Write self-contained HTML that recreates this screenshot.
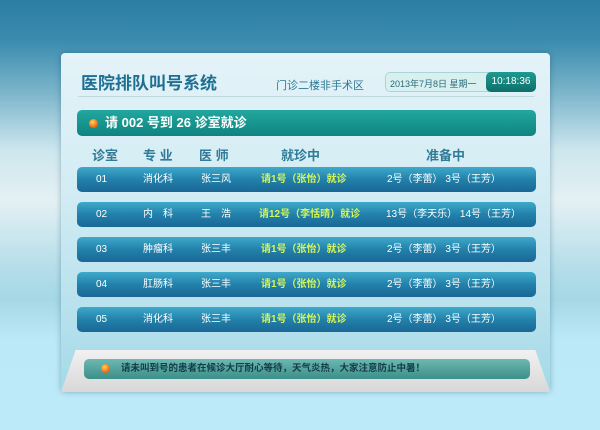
<!DOCTYPE html>
<html><head><meta charset="utf-8"><style>
*{margin:0;padding:0;box-sizing:border-box}
body{width:600px;height:430px;overflow:hidden;position:relative;font-family:"Liberation Sans","Noto Sans CJK SC",sans-serif;
background:linear-gradient(#2d7ea3 0px,#3a8bae 40px,#78b3c9 90px,#cde6ee 150px,#e4f1f4 200px,#b3dde9 270px,#a6d8e6 300px,#bce9f7 340px,#bdeaf8 430px)}
.panel{position:absolute;left:61px;top:53px;width:489px;height:339px;border-radius:4px;
background:linear-gradient(#e4f3f8,#d3ecf4 40%,#b4e0ec 80%,#a4d9e8);box-shadow:0 0 6px rgba(0,60,90,.35)}
.abs{position:absolute}
.title{left:81px;top:69px;font-size:17px;color:#1e6f92;font-weight:bold}
.sub{left:276px;top:77px;font-size:11px;color:#2e7894}
.line{left:78px;top:96px;width:456px;height:1px;background:#bcd9e2}
.date{left:385px;top:72px;width:151px;height:20px;border-radius:5px;background:#d8f0ef;border:1px solid #a8d6d6;font-size:9px;color:#2a6a7a;padding:4px 0 0 4px;white-space:nowrap;overflow:hidden}
.time{left:486px;top:72px;width:50px;height:20px;border-radius:5px;background:linear-gradient(#1f9a90,#0c6f6a);color:#fff;font-size:10px;text-align:center;line-height:20px}
.call{left:77px;top:110px;width:459px;height:26px;border-radius:5px;background:linear-gradient(#22a79e,#0e8480);color:#fff;font-size:13px;line-height:26px;padding-left:28px;font-weight:bold}
.dot{position:absolute;width:9px;height:9px;border-radius:50%;background:radial-gradient(circle at 40% 35%,#ffd35a,#f06010 70%)}
.hd{top:145px;font-size:13px;color:#2f7b98;font-weight:bold}
.row{position:absolute;left:77px;width:459px;height:25px;border-radius:5px;background:linear-gradient(#3fa9cb,#2281aa 50%,#1b6796);color:#fff;font-size:10px;line-height:25px}
.row span{position:absolute}
.g{color:#d6f55a;font-weight:bold}
.foot{left:61px;top:350px;width:489px;height:42px;background:linear-gradient(#f1f1f1,#d8d8d8);clip-path:polygon(3% 0,97% 0,100% 100%,0 100%);border-radius:14px 14px 0 0}
.fb{left:84px;top:359px;width:446px;height:20px;border-radius:5px;background:linear-gradient(#6db8b1,#3c8f89);font-size:9.5px;color:#123c48;line-height:20px;padding-left:37px;font-weight:bold}
</style></head><body>
<div class="panel"></div>
<div class="abs title">医院排队叫号系统</div>
<div class="abs sub">门诊二楼非手术区</div>
<div class="abs line"></div>
<div class="abs date">2013年7月8日 星期一</div>
<div class="abs time">10:18:36</div>
<div class="abs call"><div class="dot" style="left:12px;top:9px"></div>请 002 号到 26 诊室就诊</div>
<div class="abs hd" style="left:92px">诊室</div>
<div class="abs hd" style="left:143px">专 业</div>
<div class="abs hd" style="left:199px">医 师</div>
<div class="abs hd" style="left:281px">就珍中</div>
<div class="abs hd" style="left:426px">准备中</div>

<div class="row" style="top:167px"><span style="left:19px">01</span><span style="left:66px">消化科</span><span style="left:124px">张三风</span><span class="g" style="left:184px">请1号（张怡）就诊</span><span style="left:310px">2号（李蕾） 3号（王芳）</span></div>
<div class="row" style="top:202px"><span style="left:19px">02</span><span style="left:66px">内　科</span><span style="left:124px">王　浩</span><span class="g" style="left:182px">请12号（李恬晴）就诊</span><span style="left:309px">13号（李天乐） 14号（王芳）</span></div>
<div class="row" style="top:237px"><span style="left:19px">03</span><span style="left:66px">肿瘤科</span><span style="left:124px">张三丰</span><span class="g" style="left:184px">请1号（张怡）就诊</span><span style="left:310px">2号（李蕾） 3号（王芳）</span></div>
<div class="row" style="top:272px"><span style="left:19px">04</span><span style="left:66px">肛肠科</span><span style="left:124px">张三丰</span><span class="g" style="left:184px">请1号（张怡）就诊</span><span style="left:310px">2号（李蕾） 3号（王芳）</span></div>
<div class="row" style="top:307px"><span style="left:19px">05</span><span style="left:66px">消化科</span><span style="left:124px">张三丰</span><span class="g" style="left:184px">请1号（张怡）就诊</span><span style="left:310px">2号（李蕾） 3号（王芳）</span></div>

<div class="abs foot"></div>
<div class="abs fb"><div class="dot" style="left:17px;top:5px"></div>请未叫到号的患者在候诊大厅耐心等待，天气炎热，大家注意防止中暑！</div>
</body></html>
